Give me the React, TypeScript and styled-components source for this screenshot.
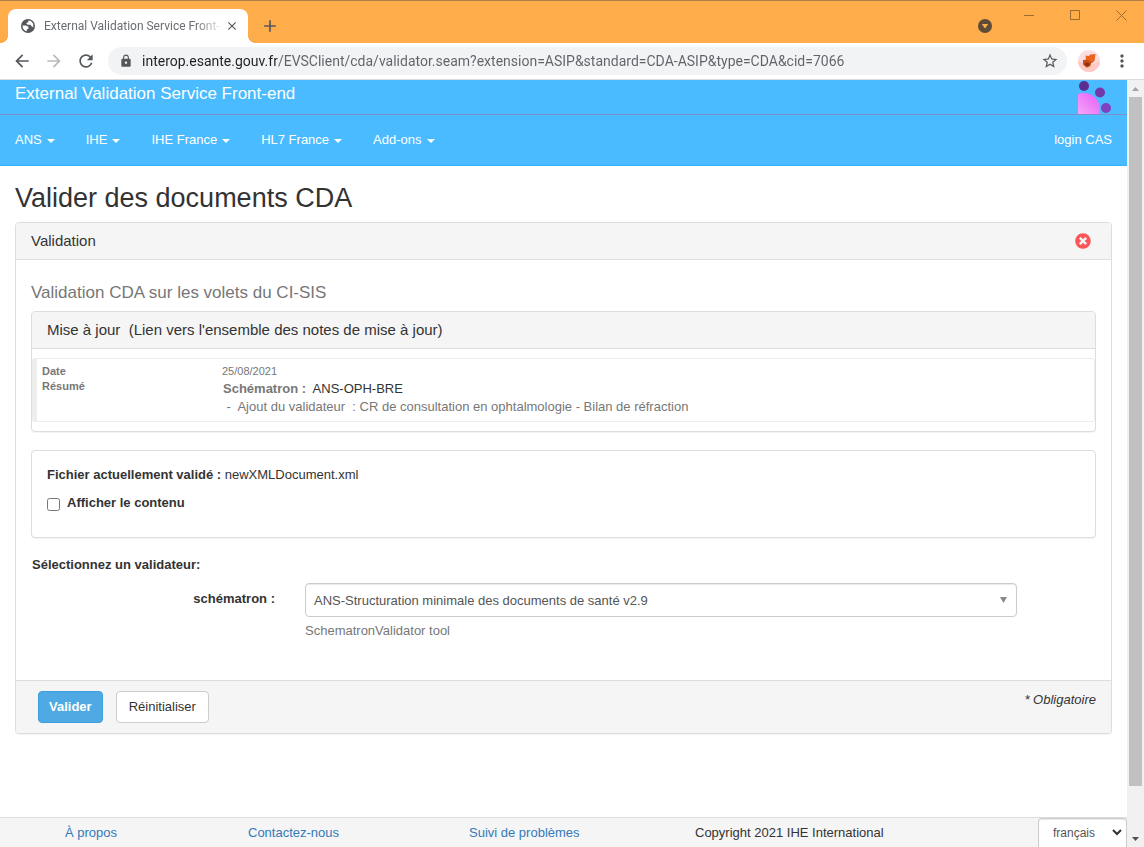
import React, { useState } from "react";
import styled, { createGlobalStyle, css } from "styled-components";
import {
  MdAdd,
  MdArrowBack,
  MdArrowForward,
  MdClose,
  MdLock,
  MdMoreVert,
  MdRefresh,
  MdStarBorder,
} from "react-icons/md";
import { FaTimesCircle } from "react-icons/fa";

const GlobalStyle = createGlobalStyle`
  *, *::before, *::after { box-sizing: border-box; }
  body {
    margin: 0;
    background: #fff;
    color: #333;
    font: 13px/18px "Liberation Sans", Arial, sans-serif;
  }
  button, input, select { font: inherit; color: inherit; }
  a { color: inherit; text-decoration: none; }
`;

const Window = styled.div`
  display: flex;
  flex-direction: column;
  min-height: 100vh;
`;

/* ---------- browser chrome ---------- */

const TabStrip = styled.header`
  display: flex;
  align-items: flex-end;
  height: 43px;
  padding-left: 8px;
  border-top: 1px solid #ae8047;
  background: #ffac4a;
  font: 12px/16px Roboto, "Segoe UI", sans-serif;
`;

const Tab = styled.div`
  position: relative;
  display: flex;
  align-items: center;
  width: 240px;
  height: 34px;
  padding: 0 8px 0 12px;
  border-radius: 8px 8px 0 0;
  background: #fff;
  color: #6a6d71;

  &::before,
  &::after {
    content: "";
    position: absolute;
    bottom: 0;
    width: 8px;
    height: 8px;
  }
  &::before {
    left: -8px;
    background: radial-gradient(circle at 0 0, transparent 8px, #fff 8px);
  }
  &::after {
    right: -8px;
    background: radial-gradient(circle at 100% 0, transparent 8px, #fff 8px);
  }
`;

const TabTitle = styled.span`
  flex: 1;
  margin-left: 8px;
  overflow: hidden;
  white-space: nowrap;
  mask-image: linear-gradient(to right, #000 84%, transparent);
`;

const IconButton = styled.button<{ $size: number; $tone?: string }>`
  display: flex;
  align-items: center;
  justify-content: center;
  flex: none;
  width: ${(p) => p.$size}px;
  height: ${(p) => p.$size}px;
  padding: 0;
  border: 0;
  background: none;
  color: ${(p) => p.$tone ?? "#54575b"};
`;

const NewTab = styled(IconButton)`
  margin: 0 auto 3px 8px;
`;

const MediaButton = styled(IconButton)`
  margin: 0 7px 3px 0;
`;

const WindowControls = styled.div`
  display: flex;
  align-self: flex-start;
`;

const WindowControl = styled.button`
  display: flex;
  align-items: center;
  justify-content: center;
  width: 46px;
  height: 28px;
  padding: 0;
  border: 0;
  background: none;
  color: #9c6b31;
`;

const Toolbar = styled.div`
  display: flex;
  align-items: center;
  height: 37px;
  padding: 0 10px 0 8px;
  border-bottom: 1px solid #d9dbde;
  background: #fff;
`;

const NavButtons = styled.div`
  display: flex;
  gap: 4px;
  margin-right: 8px;
`;

const Omnibox = styled.label`
  display: flex;
  align-items: center;
  flex: 1;
  height: 28px;
  padding: 0 8px 0 11px;
  border-radius: 14px;
  background: #f1f3f4;
  color: #54575b;
`;

const Address = styled.input`
  flex: 1;
  min-width: 0;
  height: 24px;
  margin-left: 9px;
  padding: 0;
  border: 0;
  outline: 0;
  color: #5f6368;
  background: linear-gradient(to right, #202124 135px, #5f6368 135px);
  background-clip: text;
  -webkit-background-clip: text;
  -webkit-text-fill-color: transparent;
  font: 14px/24px Roboto, "Segoe UI", sans-serif;
`;

const Profile = styled(IconButton)`
  margin: 0 10px 0 11px;
`;

const Viewport = styled.div`
  display: flex;
  flex: 1;
`;

const Scrollbar = styled.div`
  display: flex;
  flex-direction: column;
  align-items: center;
  flex: none;
  width: 17px;
  background: #f1f1f1;
`;

const ScrollArrow = styled.div<{ $down?: boolean }>`
  display: flex;
  align-items: center;
  justify-content: center;
  height: 17px;
  color: ${(p) => (p.$down ? "#505050" : "#a3a3a3")};
`;

const ScrollTrack = styled.div`
  flex: 1;
  width: 13px;
`;

const ScrollThumb = styled.div`
  height: 94%;
  background: #c1c1c1;
`;

/* ---------- page ---------- */

const Page = styled.div`
  display: flex;
  flex-direction: column;
  flex: 1;
  min-width: 0;
`;

const Brand = styled.div`
  display: flex;
  justify-content: space-between;
  height: 35px;
  padding: 0 15px;
  border-bottom: 1px solid #7c8fcb;
  background: #4abbff;
  color: #fff;
`;

const BrandName = styled.a`
  font-size: 17px;
  line-height: 28px;
`;

const Nav = styled.nav`
  display: flex;
  align-items: center;
  height: 51px;
  padding: 0 15px;
  border-bottom: 1px solid #31b1ff;
  background: #4abbff;
  color: #fff;
`;

const Menu = styled.div`
  display: flex;
  flex: 1;
  gap: 31px;
`;

const MenuItem = styled.button`
  display: flex;
  align-items: center;
  gap: 5px;
  padding: 0;
  border: 0;
  background: none;
  line-height: 18px;
`;

const Caret = styled.i`
  margin-top: 2px;
  border: 4px solid transparent;
  border-top-color: currentColor;
  border-bottom: 0;
`;

const Main = styled.main`
  flex: 1;
  padding: 16px 15px 40px;
`;

const Title = styled.h1`
  margin: 0 0 8px;
  font-size: 27px;
  line-height: 32px;
  font-weight: 400;
`;

const Panel = styled.section`
  border: 1px solid #ddd;
  border-radius: 4px;
  background: #fff;
  box-shadow: 0 1px 1px rgba(0, 0, 0, 0.05);
`;

const PanelHeading = styled.div`
  display: flex;
  align-items: center;
  justify-content: space-between;
  height: 37px;
  padding: 0 20px 0 15px;
  border-bottom: 1px solid #ddd;
  border-radius: 3px 3px 0 0;
  background: #f5f5f5;
  font-size: 15px;
`;

const PanelBody = styled.div`
  display: flex;
  flex-direction: column;
  padding: 20px 15px 40px;
`;

const Subtitle = styled.h2`
  margin: 0 0 6px;
  color: #777;
  font-size: 17px;
  line-height: 25px;
  font-weight: 400;
`;

const Release = styled.div`
  margin: 9px 0;
  padding: 5px;
  border: 1px solid #eee;
  border-left-width: 5px;
  border-radius: 3px;
`;

const ReleaseTable = styled.table`
  width: 100%;
  border-collapse: collapse;
  color: #777;
  font-size: 11px;
  line-height: 15px;

  th,
  td {
    padding: 0;
    text-align: left;
    vertical-align: top;
  }
  th {
    width: 180px;
  }
`;

const Notes = styled.div`
  padding: 1px 0 0 1px;
  font-size: 13px;
  line-height: 18px;
  white-space: pre;
`;

const Code = styled.span`
  color: #333;
`;

const FilePanel = styled(Panel)`
  display: flex;
  flex-direction: column;
  gap: 10px;
  margin: 18px 0;
  padding: 15px 15px 25px;
`;

const Check = styled.label`
  display: flex;
  gap: 7px;
  font-weight: 700;

  input {
    width: 13px;
    height: 13px;
    margin: 4px 0 0;
  }
`;

const FormTitle = styled.div`
  margin-bottom: 9px;
  padding-left: 1px;
  font-weight: 700;
`;

const Field = styled.div`
  display: grid;
  grid-template-columns: 244px minmax(0, 1fr);
  column-gap: 30px;
  padding-right: 79px;
`;

const FieldLabel = styled.label`
  padding-top: 7px;
  font-weight: 700;
  text-align: right;
`;

const Help = styled.p`
  margin: 5px 0 0;
  color: #777;
`;

const SelectBox = styled.div<{ $compact?: boolean }>`
  display: grid;
  align-items: center;

  select,
  svg {
    grid-area: 1 / 1;
  }
  svg {
    justify-self: end;
    margin-right: 9px;
    pointer-events: none;
  }
  select {
    appearance: none;
    width: 100%;
    height: 34px;
    padding: 2px 24px 0 8px;
    border: 1px solid #ccc;
    border-radius: 4px;
    background: #fff;
    box-shadow: inset 0 1px 1px rgba(0, 0, 0, 0.08);
    color: #555;
  }
  ${(p) =>
    p.$compact &&
    css`
      width: 89px;
      svg {
        margin-right: 5px;
      }
      select {
        height: 29px;
        padding: 0 18px 0 14px;
        border-bottom: 0;
        border-radius: 4px 4px 0 0;
        font-size: 12px;
      }
    `}
`;

const PanelFooter = styled.div`
  display: flex;
  justify-content: space-between;
  padding: 10px 15px 10px 22px;
  border-top: 1px solid #ddd;
  border-radius: 0 0 3px 3px;
  background: #f5f5f5;
`;

const Actions = styled.div`
  display: flex;
  gap: 13px;
`;

const Button = styled.button<{ $primary?: boolean }>`
  height: 32px;
  padding: 0 ${(p) => (p.$primary ? 10 : 12)}px 1px;
  border: 1px solid ${(p) => (p.$primary ? "#3ba0dd" : "#ccc")};
  border-radius: 4px;
  background: ${(p) => (p.$primary ? "#4fa9e2" : "#fff")};
  color: ${(p) => (p.$primary ? "#fff" : "#333")};
  font-weight: ${(p) => (p.$primary ? 700 : 400)};
`;

const PageFooter = styled.footer`
  display: grid;
  grid-template-columns: 183fr 221fr 226fr 343fr 89px;
  align-items: center;
  height: 30px;
  padding-left: 65px;
  border-top: 1px solid #ddd;
  background: #f5f5f5;
`;

const FooterLink = styled.a`
  color: #337ab7;
`;

/* ---------- drawings ---------- */

const GlobeIcon = () => (
  <svg width="16" height="16" viewBox="0 0 16 16" aria-hidden="true">
    <circle cx="8" cy="8" r="7" fill="#54575b" />
    <path d="M2.600 7.400H6l2.400 1.400v2l-1.600.8v1.600C4.200 12.700 2.300 10.200 2.600 7.400Z" fill="#fff" />
    <path d="M8.200 2.800h2.200l1 .8 1.800 2.200.2 3.400-1.600-.8-1.400-1.600H7.800L6.200 5.600l.8-1.200h1.200Z" fill="#fff" />
  </svg>
);

const MediaIcon = () => (
  <svg width="14" height="14" viewBox="0 0 14 14" aria-hidden="true">
    <circle cx="7" cy="7" r="7" fill="#5d4c38" />
    <path d="M3.800 5h6.400L7 9.500Z" fill="#ffac4a" />
  </svg>
);

const ProfileIcon = () => (
  <svg width="22" height="22" viewBox="0 0 22 22" aria-hidden="true">
    <circle cx="11" cy="11" r="11" fill="#fbdfe0" />
    <path d="M0 11c4 1.500 7 2 11 3s8-2 11-3a11 11 0 0 1-22 0Z" fill="#ffcac6" />
    <path d="M7.500 5.500 11 6l1-1.500 5.500-.5-.8 6.400-2.700 2.800-6-3.200Z" fill="#ea6420" />
    <path d="M5 10 9 9.500l4.500 2.500-1.500 5-3.500.5L5 14.500Z" fill="#c94e17" />
    <path d="m6.500 13.500 2.500-1 3 1-1.500 3-3-.5Z" fill="#8c3410" />
    <path d="m9.500 17 2.500-1 .5 2h-2.500Z" fill="#e9c77c" />
  </svg>
);

const BrandLogo = () => (
  <svg width="34" height="34" viewBox="0 0 34 34" aria-hidden="true">
    <defs>
      <linearGradient id="petal" x1="0" y1="1" x2="1" y2="0">
        <stop offset="0" stopColor="#f6a5fb" />
        <stop offset="1" stopColor="#e65cf5" />
      </linearGradient>
    </defs>
    <path d="M0 14q3-1 6-1c9 0 16 7 15.500 16l-.5 5H0Z" fill="url(#petal)" />
    <circle cx="6" cy="6" r="5" fill="#5c2d91" />
    <circle cx="22" cy="12.500" r="5" fill="#7239a8" />
    <circle cx="28" cy="28" r="5" fill="#8040bf" />
  </svg>
);

const MENUS = ["ANS", "IHE", "IHE France", "HL7 France", "Add-ons"];
const ADDRESS =
  "interop.esante.gouv.fr/EVSClient/cda/validator.seam?extension=ASIP&standard=CDA-ASIP&type=CDA&cid=7066";

export default function App() {
  const [address, setAddress] = useState(ADDRESS);

  return (
    <Window>
      <GlobalStyle />
      <TabStrip>
        <Tab>
          <GlobeIcon />
          <TabTitle>External Validation Service Front-</TabTitle>
          <IconButton $size={16} aria-label="Fermer l'onglet">
            <MdClose size={14} />
          </IconButton>
        </Tab>
        <NewTab $size={28} aria-label="Nouvel onglet">
          <MdAdd size={20} />
        </NewTab>
        <MediaButton $size={28} aria-label="Onglets">
          <MediaIcon />
        </MediaButton>
        <WindowControls>
          <WindowControl aria-label="Réduire">
            <svg width="11" height="11" stroke="currentColor" aria-hidden="true">
              <path d="M0 5.500h10" />
            </svg>
          </WindowControl>
          <WindowControl aria-label="Agrandir">
            <svg width="11" height="11" stroke="currentColor" fill="none" aria-hidden="true">
              <path d="M.5.500h9v9h-9Z" />
            </svg>
          </WindowControl>
          <WindowControl aria-label="Fermer">
            <svg width="11" height="11" stroke="currentColor" aria-hidden="true">
              <path d="m.5.500 10 10m0-10-10 10" />
            </svg>
          </WindowControl>
        </WindowControls>
      </TabStrip>

      <Toolbar>
        <NavButtons>
          <IconButton $size={28} aria-label="Précédent">
            <MdArrowBack size={20} />
          </IconButton>
          <IconButton $size={28} $tone="#b9babc" aria-label="Suivant">
            <MdArrowForward size={20} />
          </IconButton>
          <IconButton $size={28} aria-label="Actualiser">
            <MdRefresh size={20} />
          </IconButton>
        </NavButtons>
        <Omnibox>
          <MdLock size={14} />
          <Address
            aria-label="Adresse"
            value={address}
            onChange={(e) => setAddress(e.target.value)}
          />
          <IconButton $size={18} aria-label="Ajouter aux favoris">
            <MdStarBorder size={18} />
          </IconButton>
        </Omnibox>
        <Profile $size={22} aria-label="Profil">
          <ProfileIcon />
        </Profile>
        <IconButton $size={24} aria-label="Menu">
          <MdMoreVert size={20} />
        </IconButton>
      </Toolbar>

      <Viewport>
        <Page>
          <Brand>
            <BrandName href="#">External Validation Service Front-end</BrandName>
            <BrandLogo />
          </Brand>
          <Nav>
            <Menu>
              {MENUS.map((name) => (
                <MenuItem key={name}>
                  {name}
                  <Caret />
                </MenuItem>
              ))}
            </Menu>
            <a href="#login">login CAS</a>
          </Nav>

          <Main>
            <Title>Valider des documents CDA</Title>
            <Panel>
              <PanelHeading>
                Validation
                <IconButton $size={16} $tone="#fb5658" aria-label="Fermer">
                  <FaTimesCircle size={16} />
                </IconButton>
              </PanelHeading>
              <PanelBody>
                <Subtitle>Validation CDA sur les volets du CI-SIS</Subtitle>
                <Panel>
                  <PanelHeading>
                    <span>
                      Mise à jour&nbsp;{" "}
                      <a href="#notes">(Lien vers l'ensemble des notes de mise à jour)</a>
                    </span>
                  </PanelHeading>
                  <Release>
                    <ReleaseTable>
                      <tbody>
                        <tr>
                          <th scope="row">Date</th>
                          <td>25/08/2021</td>
                        </tr>
                        <tr>
                          <th scope="row">Résumé</th>
                          <td>
                            <Notes>
                              <b>Schématron :</b>
                              {"  "}
                              <Code>ANS-OPH-BRE</Code>
                              {"\n -  Ajout du validateur  : CR de consultation en ophtalmologie - Bilan de réfraction"}
                            </Notes>
                          </td>
                        </tr>
                      </tbody>
                    </ReleaseTable>
                  </Release>
                </Panel>
                <FilePanel>
                  <div>
                    <b>Fichier actuellement validé :</b> newXMLDocument.xml
                  </div>
                  <Check>
                    <input type="checkbox" />
                    Afficher le contenu
                  </Check>
                </FilePanel>
                <FormTitle>Sélectionnez un validateur:</FormTitle>
                <Field>
                  <FieldLabel htmlFor="schematron">schématron :</FieldLabel>
                  <div>
                    <SelectBox>
                      <select id="schematron">
                        <option>ANS-Structuration minimale des documents de santé v2.9</option>
                      </select>
                      <svg width="8" height="6" aria-hidden="true">
                        <path d="M0 0h7L3.500 6Z" fill="#888" />
                      </svg>
                    </SelectBox>
                    <Help>SchematronValidator tool</Help>
                  </div>
                </Field>
              </PanelBody>
              <PanelFooter>
                <Actions>
                  <Button $primary>Valider</Button>
                  <Button>Réinitialiser</Button>
                </Actions>
                <em>* Obligatoire</em>
              </PanelFooter>
            </Panel>
          </Main>

          <PageFooter>
            <FooterLink href="#about">À propos</FooterLink>
            <FooterLink href="#contact">Contactez-nous</FooterLink>
            <FooterLink href="#issues">Suivi de problèmes</FooterLink>
            <span>Copyright 2021 IHE International</span>
            <SelectBox $compact>
              <select aria-label="Langue">
                <option>français</option>
              </select>
              <svg width="10" height="7" aria-hidden="true">
                <path d="m1 1 4 4 4-4" fill="none" stroke="#333" strokeWidth="2" />
              </svg>
            </SelectBox>
          </PageFooter>
        </Page>
        <Scrollbar aria-hidden="true">
          <ScrollArrow>
            <svg width="7" height="4">
              <path d="M0 4h7L3.500 0Z" fill="currentColor" />
            </svg>
          </ScrollArrow>
          <ScrollTrack>
            <ScrollThumb />
          </ScrollTrack>
          <ScrollArrow $down>
            <svg width="7" height="4">
              <path d="M0 0h7L3.500 4Z" fill="currentColor" />
            </svg>
          </ScrollArrow>
        </Scrollbar>
      </Viewport>
    </Window>
  );
}
